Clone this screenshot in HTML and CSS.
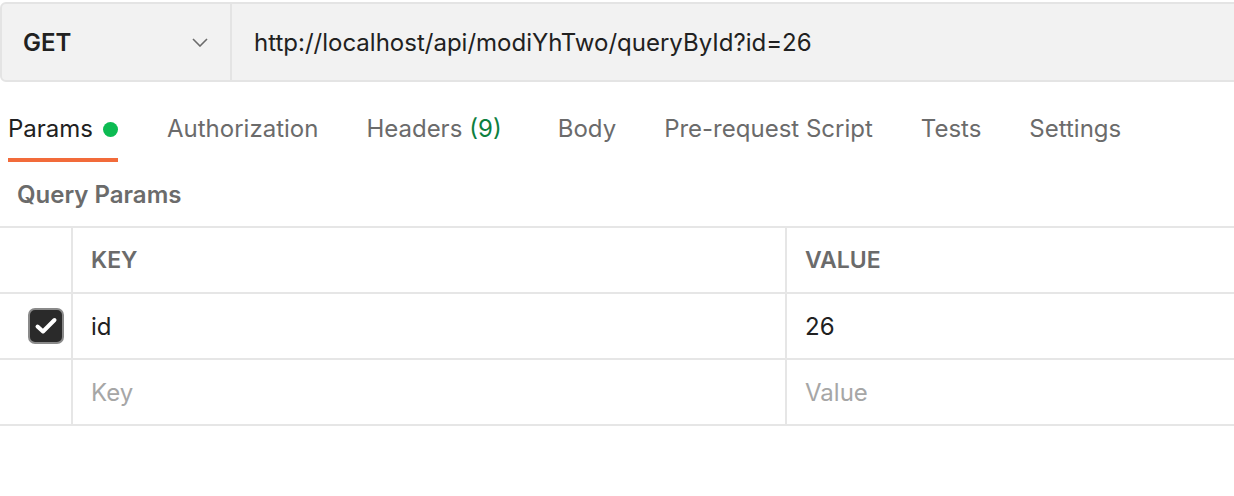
FILE: index.html
```html
<!DOCTYPE html>
<html>
<head>
<meta charset="utf-8">
<link rel="stylesheet" href="styles.css">
</head>
<body>
<div class="urlbar">
  <div class="method">
    <span class="method-name">GET</span>
    <svg class="chev" width="16" height="9" viewBox="0 0 16 9"><path d="M1 1 L8 8 L15 1" fill="none" stroke="#6b6b6b" stroke-width="1.6"/></svg>
  </div>
  <div class="url">http://localhost/api/modiYhTwo/queryById?id=26</div>
</div>
<nav class="tabs">
  <div class="tab active">Params <span class="dot"></span></div>
  <div class="tab">Authorization</div>
  <div class="tab wide">Headers <span class="count">(9)</span></div>
  <div class="tab">Body</div>
  <div class="tab">Pre-request Script</div>
  <div class="tab">Tests</div>
  <div class="tab">Settings</div>
</nav>
<div class="section-title">Query Params</div>
<div class="table">
  <div class="row head">
    <div class="c0"></div>
    <div class="c1">KEY</div>
    <div class="c2">VALUE</div>
  </div>
  <div class="row">
    <div class="c0"><span class="check"><svg width="24" height="20" viewBox="0 0 24 20"><path d="M3.5 10.5 L9 15.5 L20.5 4" fill="none" stroke="#fff" stroke-width="4" stroke-linecap="round" stroke-linejoin="round"/></svg></span></div>
    <div class="c1 val">id</div>
    <div class="c2 val">26</div>
  </div>
  <div class="row">
    <div class="c0"></div>
    <div class="c1 ph">Key</div>
    <div class="c2 ph">Value</div>
  </div>
</div>
</body>
</html>
```

FILE: styles.css
```css
* { box-sizing: border-box; }
html, body { margin: 0; padding: 0; background: #fff; }
body {
  font-family: Inter, "Noto Sans", sans-serif;
  color: #212121;
  width: 1234px;
  overflow: hidden;
}
.urlbar {
  margin-top: 2px;
  height: 80px;
  width: 1260px;
  display: flex;
  background: #f2f2f2;
  border: 2px solid #e4e4e4;
  border-radius: 6px;
}
.method {
  width: 230px;
  flex: none;
  display: flex;
  align-items: center;
  justify-content: space-between;
  padding: 0 22px 0 21px;
  border-right: 2px solid #e4e4e4;
}
.method-name {
  font-weight: 600;
  font-size: 24px;
  color: #212121;
  margin-top: 1px;
}
.chev { margin-top: 1px; }
.url {
  display: flex;
  align-items: center;
  padding-left: 22px;
  font-size: 24px;
  color: #212121;
}
.tabs {
  display: flex;
  margin-top: 17px;
  padding-left: 8px;
  height: 63px;
}
.tab {
  font-size: 24px;
  line-height: 29px;
  color: #6b6b6b;
  margin-right: 48px;
  height: 63px;
  padding-top: 15px;
  display: flex;
  align-items: flex-start;
}
.tab.wide { margin-right: 56px; }
.tab.active {
  color: #212121;
  border-bottom: 4px solid #f26b3a;
  margin-right: 49px;
}
.dot {
  display: inline-block;
  width: 15px;
  height: 15px;
  border-radius: 50%;
  background: #0cbb52;
  margin-left: 10px;
  margin-top: 8px;
}
.count { color: #0d7f3f; margin-left: 7px; }
.section-title {
  padding: 18px 0 0 17px;
  height: 64px;
  font-size: 24px;
  line-height: 29px;
  font-weight: 600;
  color: #6b6b6b;
}
.table {
  border-top: 2px solid #e6e6e6;
  width: 1300px;
}
.row {
  display: flex;
  height: 66px;
  border-bottom: 2px solid #e6e6e6;
}
.row > div {
  display: flex;
  align-items: center;
  font-size: 24px;
}
.c0 {
  width: 73px;
  border-right: 2px solid #e6e6e6;
  justify-content: flex-start;
  padding-left: 28px;
}
.c1 {
  width: 714px;
  border-right: 2px solid #e6e6e6;
  padding-left: 18px;
}
.c2 { padding-left: 18px; }
.head .c1, .head .c2 {
  font-weight: 600;
  color: #6b6b6b;
  font-size: 23px;
}
.val { color: #212121; }
.ph { color: #a6a6a6; }
.check {
  width: 36px;
  height: 36px;
  border-radius: 7px;
  background: #2a2a2a;
  border: 2px solid #8a8a8a;
  display: flex;
  align-items: center;
  justify-content: center;
}
```
